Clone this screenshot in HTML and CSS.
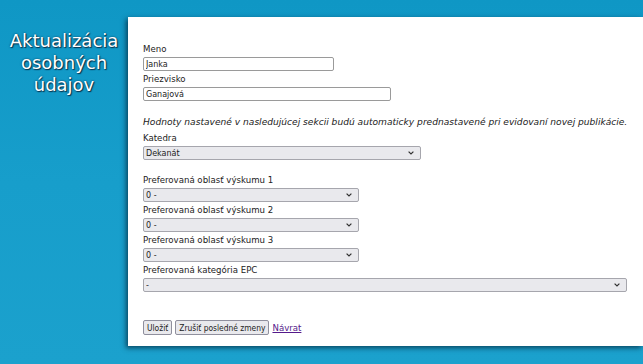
FILE: index.html
```html
<!DOCTYPE html>
<html lang="sk">
<head>
    <meta charset="UTF-8">
    <title>Aktualizácia osobných údajov</title>
    <link rel="stylesheet" href="styles.css">
</head>
<body>

<div class="page">
    <aside class="sidebar">
        <h1>Aktualizácia osobných údajov</h1>
    </aside>

    <main class="panel">
        <form class="form">
            <label for="meno">Meno</label>
            <input type="text" id="meno" class="w-meno" value="Janka">

            <label for="priezvisko">Priezvisko</label>
            <input type="text" id="priezvisko" class="w-priezvisko" value="Ganajová">

            <p class="note">Hodnoty nastavené v nasledujúcej sekcii budú automaticky prednastavené pri evidovaní novej publikácie.</p>

            <label for="katedra">Katedra</label>
            <select id="katedra" class="w-katedra">
                <option>Dekanát</option>
            </select>

            <label for="oblast1" class="first">Preferovaná oblasť výskumu 1</label>
            <select id="oblast1" class="w-oblast">
                <option>0 -</option>
            </select>

            <label for="oblast2">Preferovaná oblasť výskumu 2</label>
            <select id="oblast2" class="w-oblast">
                <option>0 -</option>
            </select>

            <label for="oblast3">Preferovaná oblasť výskumu 3</label>
            <select id="oblast3" class="w-oblast">
                <option>0 -</option>
            </select>

            <label for="epc">Preferovaná kategória EPC</label>
            <select id="epc" class="w-epc">
                <option>-</option>
            </select>

            <div class="actions">
                <button type="submit">Uložiť</button>
                <button type="reset">Zrušiť posledné zmeny</button>
                <a href="#">Návrat</a>
            </div>
        </form>
    </main>
</div>

</body>
</html>
```

FILE: styles.css
```css
html, body {
    margin: 0;
    padding: 0;
}

body {
    background-color: #169dca;
    background-image: linear-gradient(180deg, #0f97c5 0%, #179ecb 50%, #1ba1cd 100%);
    height: 364px;
    overflow: hidden;
    font-family: "DejaVu Sans", Verdana, sans-serif;
}

.page {
    display: flex;
    align-items: flex-start;
}

.sidebar {
    width: 128px;
    flex: none;
    padding-top: 30px;
}

.sidebar h1 {
    margin: 0;
    font-size: 18px;
    font-weight: normal;
    line-height: 22px;
    color: #fff;
    text-align: center;
    text-shadow: 1px 1px 1px #08334d, 0 0 2px #0a3a55;
}

.panel {
    flex: 1;
    margin-top: 17px;
    height: 329px;
    box-sizing: border-box;
    padding: 24px 15px 14px 15px;
    background-color: #fff;
    box-shadow: -2px 2px 5px rgba(0, 30, 50, 0.7);
}

.form {
    display: flex;
    flex-direction: column;
    align-items: flex-start;
    font-size: 8.6px;
    color: #222;
}

.form label {
    display: block;
    line-height: 16px;
    height: 16px;
}

.form label.first {
    margin-top: 12px;
}

.form input, .form select {
    box-sizing: border-box;
    height: 14px;
    margin: 0;
    font-family: "DejaVu Sans", Verdana, sans-serif;
    font-size: 8px;
    color: #222;
}

.form input {
    border: 1px solid #9a9a9a;
    border-radius: 2px;
    padding: 0 2px;
    background: #fff;
}

.form select {
    appearance: none;
    border: 1px solid #a6a6ad;
    border-radius: 2px;
    padding: 0 14px 0 2px;
    background-color: #e9e9ed;
    background-image: url("data:image/svg+xml;utf8,<svg xmlns='http://www.w3.org/2000/svg' width='6' height='4'><path d='M0.6 0.6 L3 3 L5.4 0.6' fill='none' stroke='%23333' stroke-width='1.2'/></svg>");
    background-repeat: no-repeat;
    background-position: right 6px center;
}

.w-meno { width: 191px; }
.w-priezvisko { width: 248px; }
.w-katedra { width: 278px; }
.w-oblast { width: 216px; }
.w-epc { width: 484px; }

.note {
    margin: 13px 0 0 0;
    font-style: italic;
    font-size: 9.1px;
    line-height: 16px;
}

.actions {
    display: flex;
    align-items: center;
    gap: 3px;
    margin-top: 28px;
}

.actions button {
    height: 15px;
    padding: 0 3px;
    font-family: "DejaVu Sans Condensed", "DejaVu Sans", sans-serif;
    font-size: 8.4px;
    color: #222;
    background-color: #e9e9ed;
    border: 1px solid #8f8f9d;
    border-radius: 2px;
}

.actions a {
    color: #551a8b;
    font-size: 8.6px;
}
```
